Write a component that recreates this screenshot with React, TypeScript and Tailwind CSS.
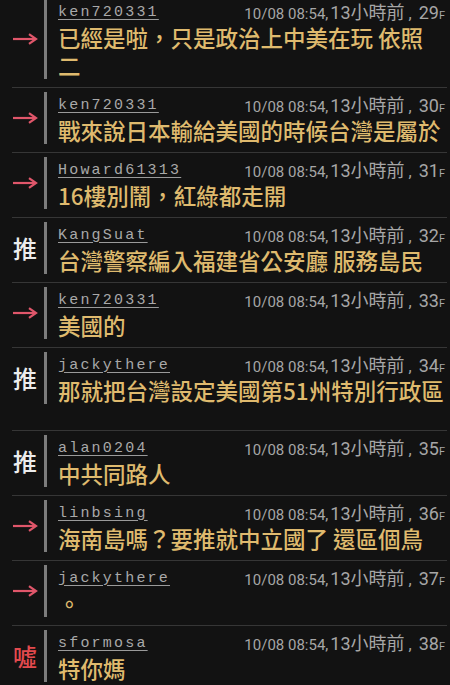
import React from "react";

type Tag = "arrow" | "push" | "boo";

interface Item {
  tag: Tag;
  user: string;
  lines: string[];
  floor: string;
  extra?: boolean;
}

const items: Item[] = [
  { tag: "arrow", user: "ken720331", lines: ["已經是啦，只是政治上中美在玩 依照", "二"], floor: "29" },
  { tag: "arrow", user: "ken720331", lines: ["戰來說日本輸給美國的時候台灣是屬於"], floor: "30" },
  { tag: "arrow", user: "Howard61313", lines: ["16樓別鬧，紅綠都走開"], floor: "31" },
  { tag: "push", user: "KangSuat", lines: ["台灣警察編入福建省公安廳 服務島民"], floor: "32" },
  { tag: "arrow", user: "ken720331", lines: ["美國的"], floor: "33" },
  { tag: "push", user: "jackythere", lines: ["那就把台灣設定美國第51州特別行政區"], floor: "34", extra: true },
  { tag: "push", user: "alan0204", lines: ["中共同路人"], floor: "35" },
  { tag: "arrow", user: "linbsing", lines: ["海南島嗎？要推就中立國了 還區個鳥"], floor: "36" },
  { tag: "arrow", user: "jackythere", lines: ["。"], floor: "37" },
  { tag: "boo", user: "sformosa", lines: ["特你媽"], floor: "38" },
];

const cjk = { fontFamily: '"Noto Sans CJK TC", "Noto Sans CJK SC", sans-serif' };
const mono = { fontFamily: '"Liberation Mono", "DejaVu Sans Mono", monospace' };
const ts = { fontFamily: 'Roboto, "Noto Sans CJK TC", sans-serif' };

function TagIcon({ tag }: { tag: Tag }) {
  if (tag === "arrow") {
    return (
      <svg width="26" height="12" viewBox="0 0 26 12" className="block">
        <path d="M1 6 H23" stroke="#e0566a" strokeWidth="2.2" fill="none" />
        <path d="M17 1.2 L24 6 L17 10.8" stroke="#e0566a" strokeWidth="2.2" fill="none" strokeLinejoin="miter" />
      </svg>
    );
  }
  if (tag === "push") {
    return (
      <span className="text-[24px] leading-none font-medium text-[#ececec]" style={cjk}>
        推
      </span>
    );
  }
  return (
    <span className="text-[24px] leading-none font-medium text-[#e24a4e]" style={cjk}>
      噓
    </span>
  );
}

function Row({ item }: { item: Item }) {
  return (
    <div
      className={`ml-[12px] mr-[3px] border-b border-[#363636] pt-[4px] ${
        item.extra ? "pb-[26px]" : "pb-[8px]"
      }`}
    >
      <div className="flex items-stretch">
        <div className="flex items-stretch">
          <div className="w-[26px] flex items-center justify-center">
            <TagIcon tag={item.tag} />
          </div>
          <div className="ml-[6px] w-[3px] bg-[#7c7c7c]" />
        </div>
        <div className="ml-[11px] flex-1 pt-[2px] pr-[2px]">
          <div className="h-[22px] flex items-center justify-between">
            <span
              className="text-[15px] leading-none tracking-[2.2px] text-[#a9a9a9] underline underline-offset-[3px] decoration-[#9a9a9a]"
              style={mono}
            >
              {item.user}
            </span>
            <span className="flex items-baseline text-[#a6a6a6] whitespace-nowrap" style={ts}>
              <span className="text-[15px]">10/08 08:54,</span>
              <span className="text-[18px] ml-[2px]">13小時前</span>
              <span className="text-[16px] ml-[4px]">,</span>
              <span className="text-[18px] ml-[7px]">{item.floor}</span>
              <span className="text-[11px]">F</span>
            </span>
          </div>
          <div
            className="text-[22.5px] leading-[28px] font-medium text-[#dfba6e] whitespace-nowrap"
            style={cjk}
          >
            {item.lines.map((l, i) => (
              <React.Fragment key={i}>
                {i > 0 && <br />}
                {l}
              </React.Fragment>
            ))}
          </div>
        </div>
      </div>
    </div>
  );
}

export default function App() {
  return (
    <div className="w-[450px] h-[685px] overflow-hidden bg-[#121212]">
      <div className="-mt-[5px]">
        {items.map((it, i) => (
          <Row key={i} item={it} />
        ))}
      </div>
    </div>
  );
}
